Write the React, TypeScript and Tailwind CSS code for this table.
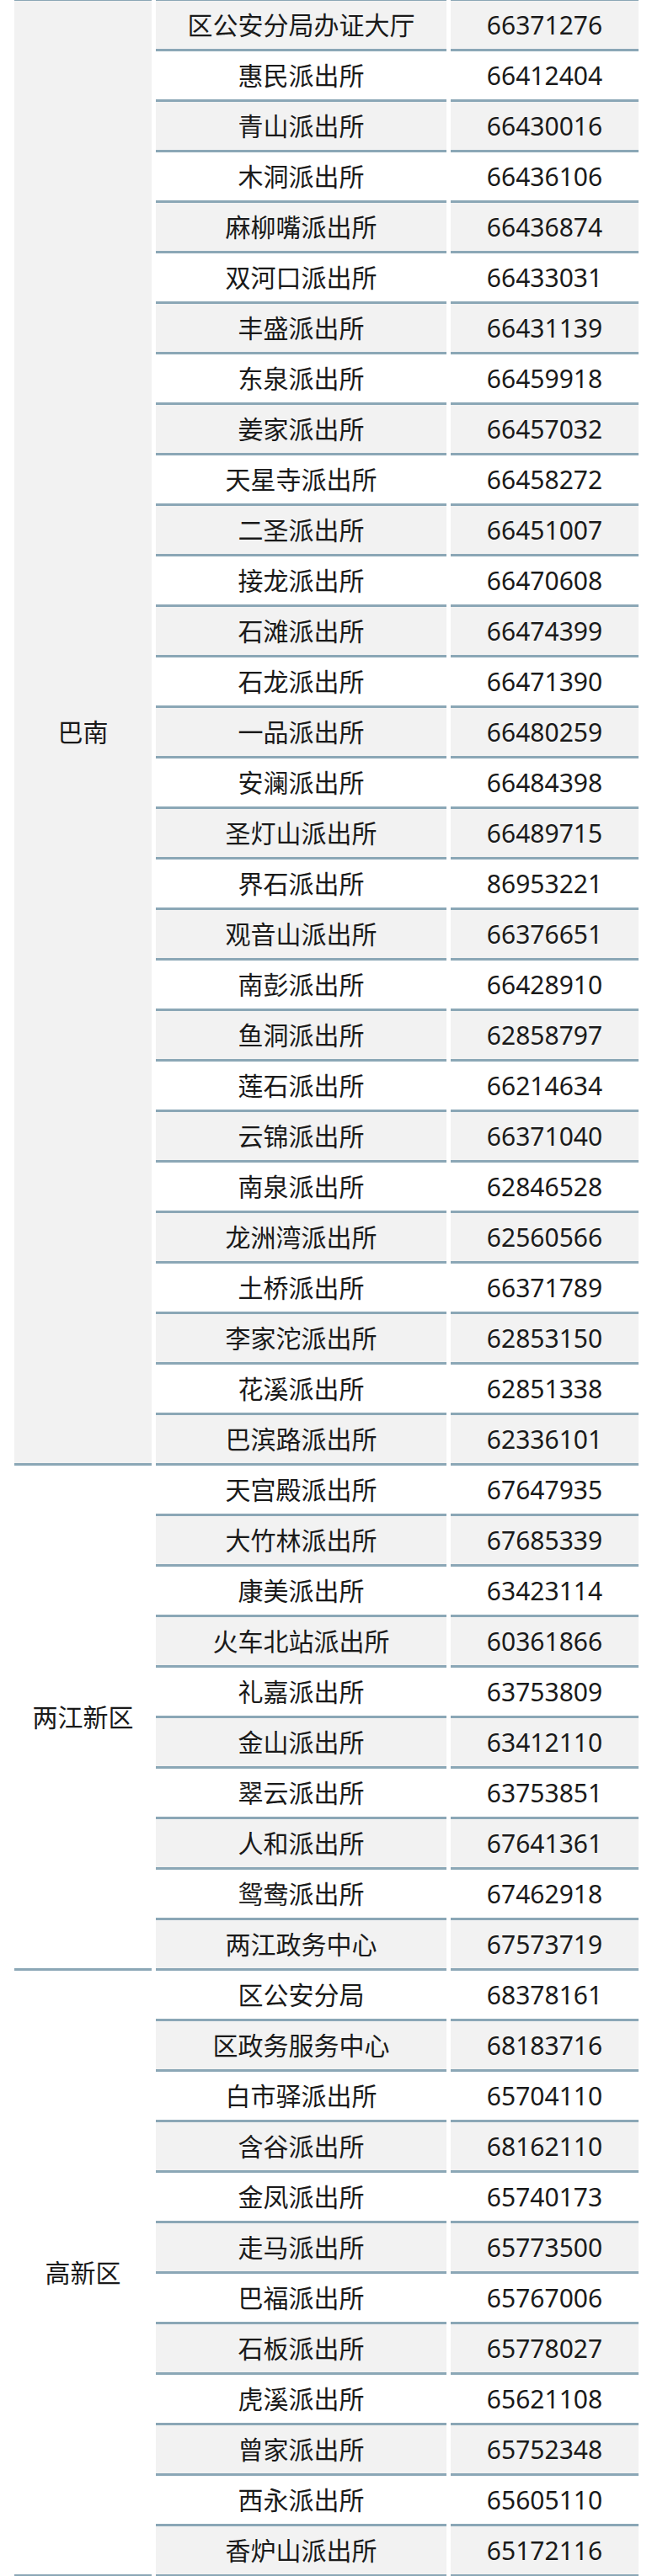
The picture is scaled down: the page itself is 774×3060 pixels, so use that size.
import React from 'react';

type Station = [string, string];

const groups: { district: string; shaded: boolean; rows: Station[] }[] = [
  {
    district: '巴南',
    shaded: true,
    rows: [
      ['区公安分局办证大厅', '66371276'],
      ['惠民派出所', '66412404'],
      ['青山派出所', '66430016'],
      ['木洞派出所', '66436106'],
      ['麻柳嘴派出所', '66436874'],
      ['双河口派出所', '66433031'],
      ['丰盛派出所', '66431139'],
      ['东泉派出所', '66459918'],
      ['姜家派出所', '66457032'],
      ['天星寺派出所', '66458272'],
      ['二圣派出所', '66451007'],
      ['接龙派出所', '66470608'],
      ['石滩派出所', '66474399'],
      ['石龙派出所', '66471390'],
      ['一品派出所', '66480259'],
      ['安澜派出所', '66484398'],
      ['圣灯山派出所', '66489715'],
      ['界石派出所', '86953221'],
      ['观音山派出所', '66376651'],
      ['南彭派出所', '66428910'],
      ['鱼洞派出所', '62858797'],
      ['莲石派出所', '66214634'],
      ['云锦派出所', '66371040'],
      ['南泉派出所', '62846528'],
      ['龙洲湾派出所', '62560566'],
      ['土桥派出所', '66371789'],
      ['李家沱派出所', '62853150'],
      ['花溪派出所', '62851338'],
      ['巴滨路派出所', '62336101'],
    ],
  },
  {
    district: '两江新区',
    shaded: false,
    rows: [
      ['天宫殿派出所', '67647935'],
      ['大竹林派出所', '67685339'],
      ['康美派出所', '63423114'],
      ['火车北站派出所', '60361866'],
      ['礼嘉派出所', '63753809'],
      ['金山派出所', '63412110'],
      ['翠云派出所', '63753851'],
      ['人和派出所', '67641361'],
      ['鸳鸯派出所', '67462918'],
      ['两江政务中心', '67573719'],
    ],
  },
  {
    district: '高新区',
    shaded: false,
    rows: [
      ['区公安分局', '68378161'],
      ['区政务服务中心', '68183716'],
      ['白市驿派出所', '65704110'],
      ['含谷派出所', '68162110'],
      ['金凤派出所', '65740173'],
      ['走马派出所', '65773500'],
      ['巴福派出所', '65767006'],
      ['石板派出所', '65778027'],
      ['虎溪派出所', '65621108'],
      ['曾家派出所', '65752348'],
      ['西永派出所', '65605110'],
      ['香炉山派出所', '65172116'],
    ],
  },
];

export default function App() {
  let index = 0;

  return (
    <div
      className="min-h-screen bg-white pl-[17px] pr-[16px] text-[30px] leading-none text-[#1a1a1a]"
      style={{ fontFamily: '"Noto Sans", "Noto Sans CJK SC", sans-serif' }}
    >
      {/* cut-off line of the row above */}
      <div className="flex gap-[5px]">
        <div className="h-px w-[163px] bg-[#8ba7b6]" />
        <div className="h-px w-[345px] bg-[#8ba7b6]" />
        <div className="h-px flex-1 bg-[#8ba7b6]" />
      </div>

      {groups.map((group) => (
        <div key={group.district} className="flex gap-[5px]">
          <div
            className={`flex w-[163px] shrink-0 items-center justify-center border-b-[3px] border-[#8ba7b6] ${
              group.shaded ? 'bg-[#f2f2f2]' : 'bg-white'
            }`}
          >
            {group.district}
          </div>
          <div className="flex flex-1 flex-col">
            {group.rows.map(([name, phone]) => {
              const gray = index++ % 2 === 0;
              const bg = gray ? 'bg-[#f2f2f2]' : 'bg-white';
              return (
                <div key={name} className="flex h-[60px] gap-[5px]">
                  <div
                    className={`flex w-[345px] items-center justify-center border-b-[3px] border-[#8ba7b6] ${bg}`}
                  >
                    {name}
                  </div>
                  <div
                    className={`flex flex-1 items-center justify-center border-b-[3px] border-[#8ba7b6] ${bg}`}
                  >
                    {phone}
                  </div>
                </div>
              );
            })}
          </div>
        </div>
      ))}
    </div>
  );
}
